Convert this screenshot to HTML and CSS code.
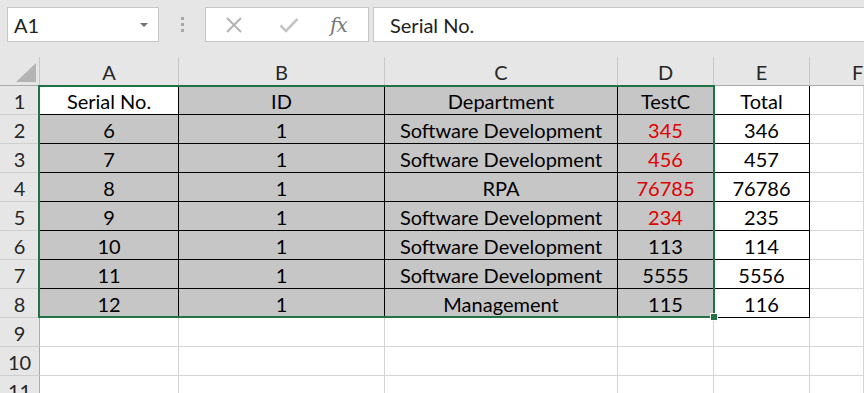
FILE: index.html
```html
<!DOCTYPE html>
<html>
<head>
<meta charset="utf-8">
<link rel="stylesheet" href="styles.css">
</head>
<body>
<div class="toolbar">
  <div class="namebox"><span class="nb-text">A1</span><span class="nb-arrow"></span></div>
  <div class="dots"><i></i><i></i><i></i></div>
  <div class="fxbox">
    <svg class="ic ic-x" width="18" height="16" viewBox="0 0 18 16"><path d="M2 1 L16 15 M16 1 L2 15" stroke="#b3b3b3" stroke-width="2" fill="none"/></svg>
    <svg class="ic ic-check" width="20" height="16" viewBox="0 0 20 16"><path d="M1.5 8.5 L7 14 L18.5 2" stroke="#c4c4c4" stroke-width="2.6" fill="none"/></svg>
    <span class="fx">fx</span>
  </div>
  <div class="formula">Serial No.</div>
</div>
<div class="sheet">
  <div class="corner"><span class="tri"></span></div>
  <div class="ch">A</div><div class="ch">B</div><div class="ch">C</div><div class="ch">D</div><div class="ch">E</div><div class="ch last">F</div>

  <div class="rh">1</div>
  <div class="c b active">Serial No.</div><div class="c b g">ID</div><div class="c b g">Department</div><div class="c b g">TestC</div><div class="c b">Total</div><div class="c"></div>

  <div class="rh">2</div>
  <div class="c b g">6</div><div class="c b g">1</div><div class="c b g">Software Development</div><div class="c b g red">345</div><div class="c b">346</div><div class="c"></div>

  <div class="rh">3</div>
  <div class="c b g">7</div><div class="c b g">1</div><div class="c b g">Software Development</div><div class="c b g red">456</div><div class="c b">457</div><div class="c"></div>

  <div class="rh">4</div>
  <div class="c b g">8</div><div class="c b g">1</div><div class="c b g">RPA</div><div class="c b g red">76785</div><div class="c b">76786</div><div class="c"></div>

  <div class="rh">5</div>
  <div class="c b g">9</div><div class="c b g">1</div><div class="c b g">Software Development</div><div class="c b g red">234</div><div class="c b">235</div><div class="c"></div>

  <div class="rh">6</div>
  <div class="c b g">10</div><div class="c b g">1</div><div class="c b g">Software Development</div><div class="c b g">113</div><div class="c b">114</div><div class="c"></div>

  <div class="rh">7</div>
  <div class="c b g">11</div><div class="c b g">1</div><div class="c b g">Software Development</div><div class="c b g">5555</div><div class="c b">5556</div><div class="c"></div>

  <div class="rh">8</div>
  <div class="c b g">12</div><div class="c b g">1</div><div class="c b g">Management</div><div class="c b g">115</div><div class="c b">116</div><div class="c"></div>

  <div class="rh">9</div>
  <div class="c"></div><div class="c"></div><div class="c"></div><div class="c"></div><div class="c"></div><div class="c"></div>

  <div class="rh">10</div>
  <div class="c"></div><div class="c"></div><div class="c"></div><div class="c"></div><div class="c"></div><div class="c"></div>

  <div class="rh">11</div>
  <div class="c"></div><div class="c"></div><div class="c"></div><div class="c"></div><div class="c"></div><div class="c"></div>

  <div class="selection"><span class="handle"></span></div>
</div>
</body>
</html>
```

FILE: styles.css
```css
* { box-sizing: border-box; }
html, body { margin: 0; padding: 0; background: #ffffff; overflow: hidden; }
body { width: 864px; height: 393px; font-family: "Lato", "Liberation Sans", sans-serif; color: #000; }

.toolbar {
  height: 57px;
  background: #e6e6e6;
  display: flex;
  align-items: flex-start;
  padding: 7px 0 0 7px;
}
.namebox {
  width: 152px; height: 35px;
  background: #fff;
  border: 1px solid #c6c6c6;
  display: flex; align-items: center; justify-content: space-between;
  padding: 0 10px 0 6px;
}
.nb-text { font-size: 20px; color: #222; }
.nb-arrow {
  width: 0; height: 0;
  border-left: 4px solid transparent; border-right: 4px solid transparent;
  border-top: 4px solid #707070;
}
.dots {
  width: 46px; height: 35px;
  display: flex; flex-direction: column; align-items: center; justify-content: center; gap: 3px;
}
.dots i { display: block; width: 3px; height: 3px; background: #a8a8a8; }
.fxbox {
  width: 164px; height: 35px;
  background: #fff; border: 1px solid #c6c6c6;
  display: flex; align-items: center;
  padding-left: 19px;
}
.ic-x { margin-right: 36px; }
.ic-check { margin-right: 31px; }
.fx { font-family: "DejaVu Serif", "Liberation Serif", serif; font-style: italic; font-size: 20px; color: #777; letter-spacing: -1px; }
.formula {
  flex: 1; height: 35px; margin-left: 4px;
  background: #fff; border: 1px solid #c6c6c6; border-right: none;
  display: flex; align-items: center; padding-left: 16px;
  font-size: 20px; color: #222;
}

.sheet {
  position: relative;
  display: grid;
  grid-template-columns: 40px 139px 206px 233px 96px 96px 1fr;
  grid-template-rows: repeat(12, 29px);
  background: #fff;
  font-size: 20px;
}
.corner, .ch, .rh {
  background: #e6e6e6;
  border-right: 1px solid #bcbcbc;
  border-bottom: 1px solid #bcbcbc;
  display: flex; align-items: center; justify-content: center;
  color: #262626;
}
.ch { border-right-color: #c8c8c8; border-bottom-color: #ababab; padding-top: 2px; }
.corner { border-right-color: #c8c8c8; border-bottom-color: #ababab; position: relative; }
.ch.last { border-right: none; justify-content: flex-start; padding-left: 42px; }
.rh { border-bottom-color: #cfcfcf; border-right-color: #ababab; padding-top: 1px; }
.tri {
  position: absolute; right: 3px; bottom: 3px;
  width: 0; height: 0;
  border-left: 20px solid transparent;
  border-bottom: 19px solid #b4b4b4;
}
.c {
  border-right: 1px solid #d4d4d4;
  border-bottom: 1px solid #d4d4d4;
  display: flex; align-items: center; justify-content: center;
  white-space: nowrap; padding-top: 1px;
}
.c.b { border-right-color: #000; border-bottom-color: #000; }
.c.g { background: #c6c6c6; }
.c.active { background: #fff; }
.c.red { color: #e00000; }

.selection {
  position: absolute;
  left: 38px; top: 28px;
  width: 677px; height: 233px;
  border: 2px solid #217346;
  pointer-events: none;
}
.handle {
  position: absolute;
  right: -5px; bottom: -5px;
  width: 8px; height: 8px;
  background: #217346;
  border: 1px solid #fff;
}
```
